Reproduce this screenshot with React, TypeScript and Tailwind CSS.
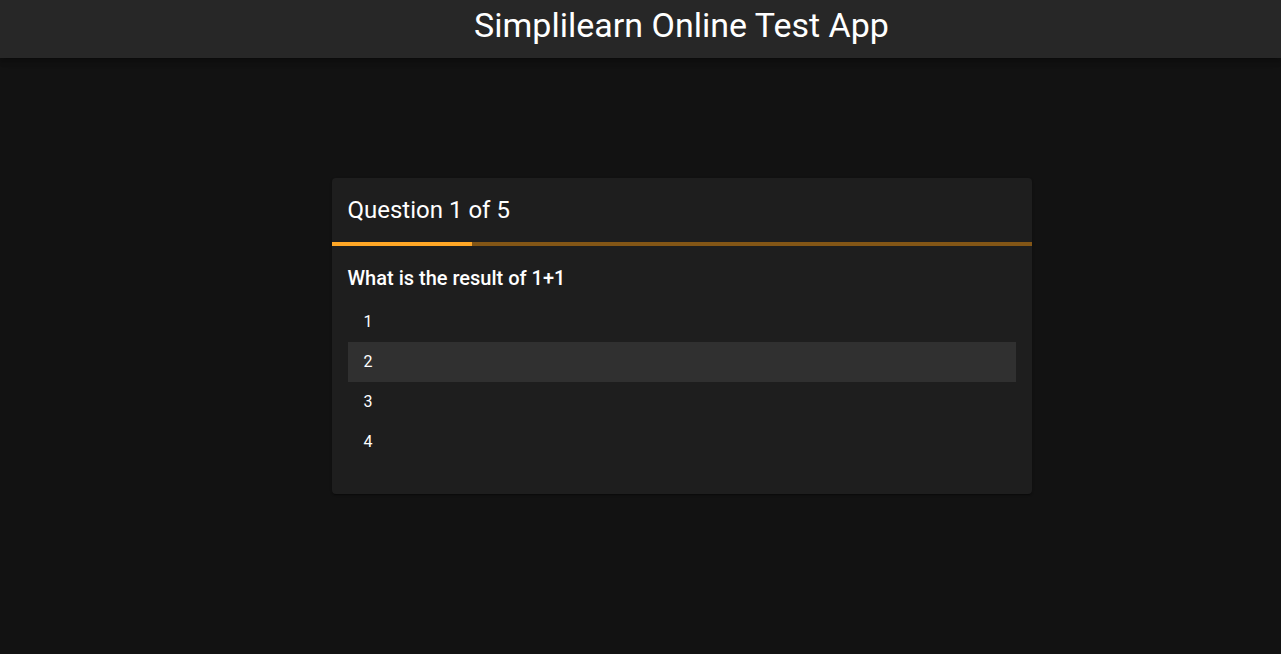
import { useState } from "react";

const question = { text: "What is the result of 1+1", options: ["1", "2", "3", "4"] };
const current = 1;
const total = 5;

export default function App() {
  const [selected, setSelected] = useState(1);
  return (
    <div className="flex min-h-screen flex-col bg-[#121212] font-['Roboto',sans-serif] text-white">
      <header className="flex justify-center bg-[#272727] pb-2 pl-[82px] shadow-[0_2px_4px_-1px_rgba(0,0,0,0.2),0_4px_5px_rgba(0,0,0,0.14),0_1px_10px_rgba(0,0,0,0.12)]">
        <h1 className="text-[34px] leading-[50px]">Simplilearn Online Test App</h1>
      </header>
      <main className="flex grow justify-center pt-[120px] pl-[82px]">
        <section className="w-full max-w-[700px] self-start rounded bg-[#1e1e1e] pb-8 shadow-[0_2px_1px_-1px_rgba(0,0,0,0.2),0_1px_1px_rgba(0,0,0,0.14),0_1px_3px_rgba(0,0,0,0.12)]">
          <h2 className="px-4 py-4 text-2xl leading-8">Question {current} of {total}</h2>
          <div role="progressbar" aria-label="Test progress" aria-valuenow={current} aria-valuemin={0} aria-valuemax={total} className="h-1 bg-[#835616]">
            <div className="h-full bg-[#ffa726]" style={{ width: `${(current / total) * 100}%` }} />
          </div>
          <div className="px-4 pt-4">
            <h3 className="text-xl leading-8 font-medium">{question.text}</h3>
            <ul className="pt-2">
              {question.options.map((option, i) => (
                <li key={option}>
                  <button
                    type="button"
                    aria-pressed={i === selected}
                    onClick={() => setSelected(i)}
                    className={`h-10 w-full px-4 text-left text-base ${i === selected ? "bg-[#303030]" : ""}`}
                  >
                    {option}
                  </button>
                </li>
              ))}
            </ul>
          </div>
        </section>
      </main>
    </div>
  );
}
